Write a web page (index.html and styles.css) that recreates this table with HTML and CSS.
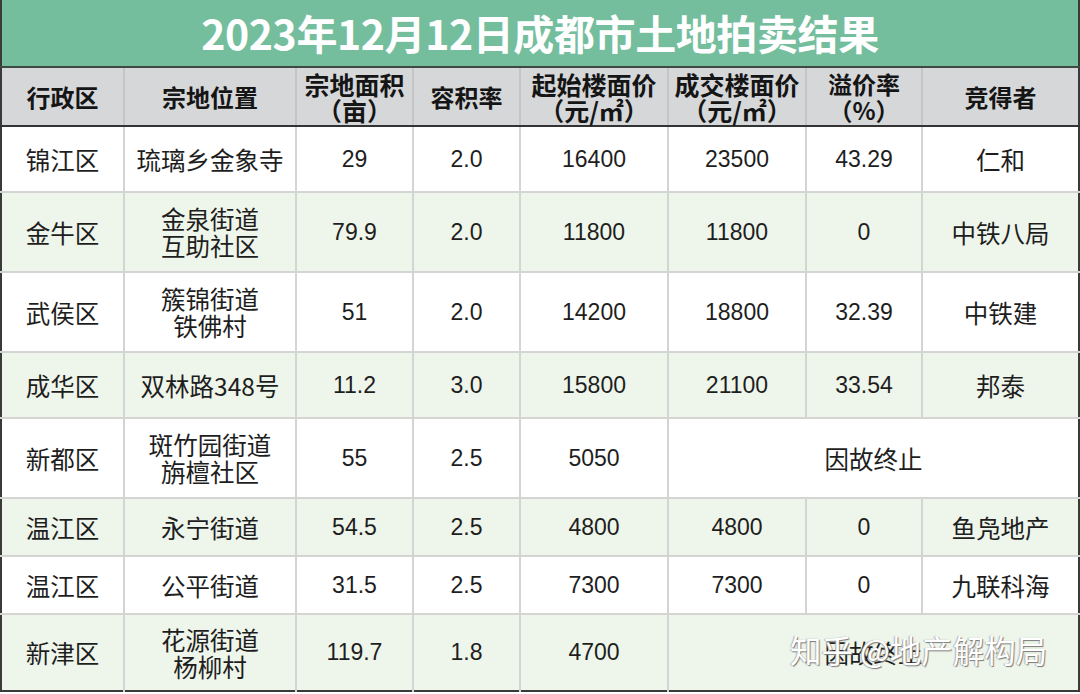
FILE: index.html
```html
<!DOCTYPE html>
<html lang="zh">
<head>
<meta charset="utf-8">
<title>2023年12月12日成都市土地拍卖结果</title>
<link rel="stylesheet" href="styles.css">
</head>
<body>
<div class="sheet">
  <table class="land">
    <colgroup>
      <col class="c1"><col class="c2"><col class="c3"><col class="c4"><col class="c5"><col class="c6"><col class="c7"><col class="c8">
    </colgroup>
    <thead>
      <tr class="title-row"><th colspan="8" class="title">2023年12月12日成都市土地拍卖结果</th></tr>
      <tr class="head-row">
        <th>行政区</th>
        <th>宗地位置</th>
        <th class="wide">宗地面积<br>（亩）</th>
        <th>容积率</th>
        <th class="wide">起始楼面价<br>（元/㎡）</th>
        <th class="wide">成交楼面价<br>（元/㎡）</th>
        <th>溢价率<br>（%）</th>
        <th>竞得者</th>
      </tr>
    </thead>
    <tbody>
      <tr class="r1"><td>锦江区</td><td>琉璃乡金象寺</td><td class="num">29</td><td class="num">2.0</td><td class="num">16400</td><td class="num">23500</td><td class="num">43.29</td><td>仁和</td></tr>
      <tr class="r2 alt"><td>金牛区</td><td>金泉街道<br>互助社区</td><td class="num">79.9</td><td class="num">2.0</td><td class="num">11800</td><td class="num">11800</td><td class="num">0</td><td>中铁八局</td></tr>
      <tr class="r3"><td>武侯区</td><td>簇锦街道<br>铁佛村</td><td class="num">51</td><td class="num">2.0</td><td class="num">14200</td><td class="num">18800</td><td class="num">32.39</td><td>中铁建</td></tr>
      <tr class="r4 alt"><td>成华区</td><td>双林路348号</td><td class="num">11.2</td><td class="num">3.0</td><td class="num">15800</td><td class="num">21100</td><td class="num">33.54</td><td>邦泰</td></tr>
      <tr class="r5"><td>新都区</td><td>斑竹园街道<br>旃檀社区</td><td class="num">55</td><td class="num">2.5</td><td class="num">5050</td><td colspan="3">因故终止</td></tr>
      <tr class="r6 alt"><td>温江区</td><td>永宁街道</td><td class="num">54.5</td><td class="num">2.5</td><td class="num">4800</td><td class="num">4800</td><td class="num">0</td><td>鱼凫地产</td></tr>
      <tr class="r7"><td>温江区</td><td>公平街道</td><td class="num">31.5</td><td class="num">2.5</td><td class="num">7300</td><td class="num">7300</td><td class="num">0</td><td>九联科海</td></tr>
      <tr class="r8 alt"><td>新津区</td><td>花源街道<br>杨柳村</td><td class="num">119.7</td><td class="num">1.8</td><td class="num">4700</td><td colspan="3">因故终止</td></tr>
    </tbody>
  </table>
  <div class="watermark">知乎 @地产解构局</div>
</div>
</body>
</html>
```

FILE: styles.css
```css
html, body {
  margin: 0;
  padding: 0;
  background: #ffffff;
}

.sheet {
  position: relative;
  width: 1080px;
  height: 694px;
  overflow: hidden;
  font-family: "Liberation Sans", "Noto Sans CJK SC", sans-serif;
  color: #1e1e1e;
}

.land {
  width: 1078px;
  border-collapse: collapse;
  table-layout: fixed;
  border-left: 2px solid #3a3a3a;
  border-right: 2px solid #3a3a3a;
  border-bottom: 2px solid #3a3a3a;
}

.c1 { width: 123px; }
.c2 { width: 172px; }
.c3 { width: 117px; }
.c4 { width: 107px; }
.c5 { width: 148px; }
.c6 { width: 138px; }
.c7 { width: 116px; }
.c8 { width: 157px; }

.title {
  height: 63px;
  padding: 0 0 3px;
  background: #74be9e;
  color: #ffffff;
  font-family: "Noto Sans CJK SC", sans-serif;
  font-weight: 700;
  font-size: 41px;
  line-height: 44px;
  letter-spacing: -0.4px;
  text-align: center;
  border-bottom: 2px solid #3d4a44;
}

.head-row th {
  height: 57px;
  padding: 0;
  background: #d6d7d9;
  font-family: "Noto Sans CJK SC", sans-serif;
  font-weight: 700;
  font-size: 24px;
  line-height: 26px;
  color: #151515;
  text-align: center;
  vertical-align: middle;
  border-left: 2px solid #c4c5c7;
  border-bottom: 2px solid #333333;
}

.head-row th.wide { font-size: 25px; }

.head-row th:first-child { border-left: none; }

tbody td {
  padding: 0;
  font-family: "Noto Sans CJK SC", sans-serif;
  font-size: 24.5px;
  line-height: 27px;
  text-align: center;
  vertical-align: middle;
  border-left: 2px solid #d4d4d4;
  border-top: 2px solid #d4d4d4;
  background: #ffffff;
}

tbody td.num {
  font-family: "Liberation Sans", sans-serif;
  font-size: 23px;
}

tbody td:first-child { border-left: none; }
tbody tr.r1 td { border-top: none; }

tbody tr.alt td { background: #eef5ea; }

.r1 td { height: 64px; }
.r2 td { height: 78px; }
.r3 td { height: 78px; }
.r4 td { height: 64px; }
.r5 td { height: 78px; }
.r6 td { height: 56px; }
.r7 td { height: 56px; }
.r8 td { height: 75px; }

.watermark {
  position: absolute;
  left: 790px;
  top: 629px;
  font-family: "Noto Sans CJK SC", sans-serif;
  font-size: 31.5px;
  line-height: 40px;
  color: #ffffff;
  text-shadow: 1px 1px 1px #7a7a7a, -1px 0 1px #b0b0b0;
  white-space: nowrap;
}
```
